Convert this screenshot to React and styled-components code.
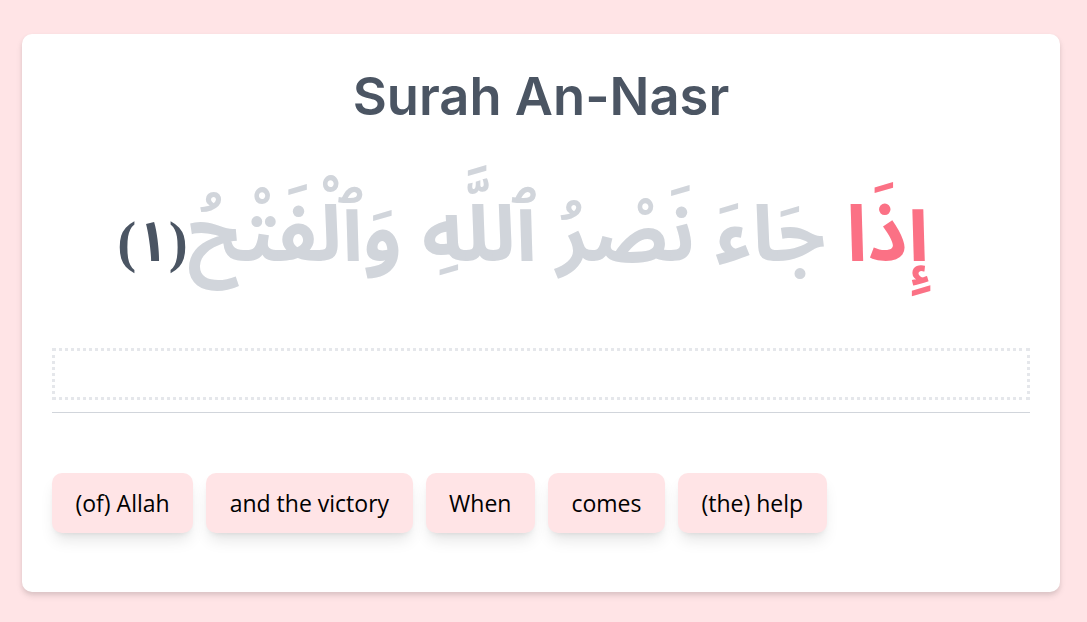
import React from 'react'
import styled, { createGlobalStyle } from 'styled-components'

const words = ['(of) Allah', 'and the victory', 'When', 'comes', '(the) help']

const GlobalStyle = createGlobalStyle`
    body {
        margin: 0;
        background: #ffe4e6;
        font-family: "Open Sans", "Noto Sans", sans-serif;
    }
`

const Page = styled.div`
    padding: 34px 27px 30px 22px;
`

const Card = styled.div`
    background: #fff;
    border-radius: 10px;
    box-shadow: 0 4px 6px rgba(0, 0, 0, .1), 0 2px 4px rgba(0, 0, 0, .06);
    padding: 30px 30px 59px;
`

const Title = styled.h1`
    margin: 0;
    text-align: center;
    font-family: Inter, "Noto Sans", sans-serif;
    font-weight: 600;
    font-size: 52.5px;
    line-height: 64px;
    color: #4b5563;
`

const Verse = styled.p`
    margin: 49px 0 51px;
    padding-right: 36px;
    direction: rtl;
    text-align: center;
    font-family: "Noto Sans Arabic", "Noto Naskh Arabic", "DejaVu Sans", sans-serif;
    font-weight: 700;
    font-size: 78px;
    line-height: 120px;
    height: 120px;
    color: #d1d5db;
`

const Highlight = styled.span`
    color: #fb7185;
`

const Number = styled.span`
    color: #4b5563;
    font-family: "Liberation Serif", "Noto Sans Arabic", serif;
    font-size: 57px;
    line-height: 1;
`

const DropZone = styled.div`
    height: 46px;
    border: 3px dotted #e5e7eb;
`

const Divider = styled.hr`
    margin: 12px 0 0;
    border: 0;
    border-top: 1px solid #d1d5db;
`

const Options = styled.div`
    display: flex;
    gap: 13px;
    margin-top: 60px;
`

const Option = styled.button`
    height: 60px;
    padding: 0 23.5px;
    border: 0;
    border-radius: 10px;
    background: #ffe4e6;
    color: #000;
    font-family: "Open Sans", "Noto Sans", sans-serif;
    font-size: 23px;
    box-shadow: 0 10px 15px -3px rgba(0, 0, 0, .1), 0 4px 6px -4px rgba(0, 0, 0, .1);
    cursor: pointer;
`

const App = () => {
    return (
        <Page>
            <GlobalStyle />
            <Card>
                <Title>Surah An-Nasr</Title>
                <Verse>
                    <Highlight>إِذَا</Highlight> جَاءَ نَصْرُ ٱللَّهِ وَٱلْفَتْحُ<Number>(١)</Number>
                </Verse>
                <DropZone />
                <Divider />
                <Options>
                    {words.map((w, id) => (
                        <Option key={id}>{w}</Option>
                    ))}
                </Options>
            </Card>
        </Page>
    )
}

export default App
